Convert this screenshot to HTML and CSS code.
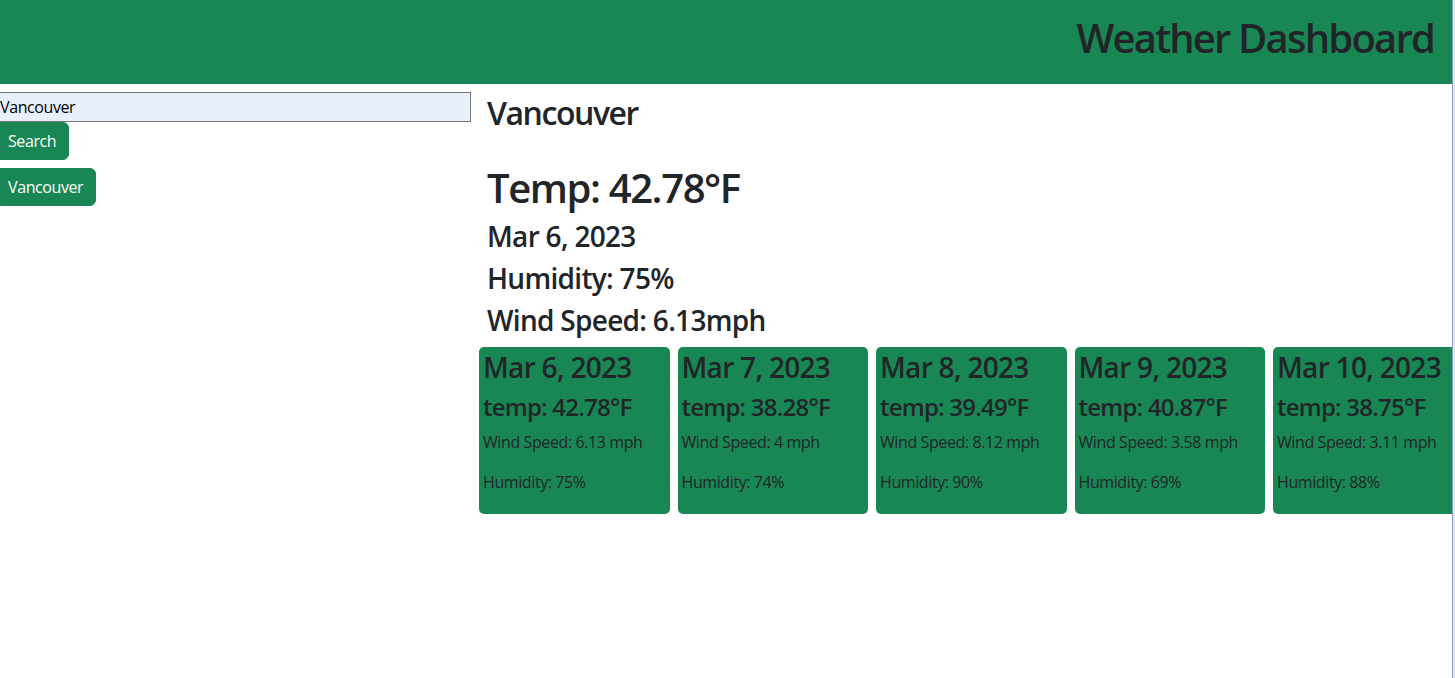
FILE: index.html
```html
<!DOCTYPE html>
<html lang="en">
<head>
<meta charset="utf-8">
<title>Weather Dashboard</title>
<link rel="stylesheet" href="styles.css">
</head>
<body>
<header class="site-header">
  <h1 class="site-title">Weather Dashboard</h1>
</header>
<main class="layout">
  <aside class="sidebar">
    <input class="search-input" type="text" value="Vancouver">
    <button class="btn btn-search">Search</button>
    <div class="history">
      <button class="btn">Vancouver</button>
    </div>
  </aside>
  <section class="content">
    <div class="current">
      <h2 class="city">Vancouver</h2>
      <h1 class="temp">Temp: 42.78°F</h1>
      <h3 class="line">Mar 6, 2023</h3>
      <h3 class="line">Humidity: 75%</h3>
      <h3 class="line">Wind Speed: 6.13mph</h3>
    </div>
    <div class="forecast">
      <div class="card">
        <h3 class="card-date">Mar 6, 2023</h3>
        <h4 class="card-temp">temp: 42.78°F</h4>
        <p class="card-text">Wind Speed: 6.13 mph</p>
        <p class="card-text">Humidity: 75%</p>
      </div>
      <div class="card">
        <h3 class="card-date">Mar 7, 2023</h3>
        <h4 class="card-temp">temp: 38.28°F</h4>
        <p class="card-text">Wind Speed: 4 mph</p>
        <p class="card-text">Humidity: 74%</p>
      </div>
      <div class="card">
        <h3 class="card-date">Mar 8, 2023</h3>
        <h4 class="card-temp">temp: 39.49°F</h4>
        <p class="card-text">Wind Speed: 8.12 mph</p>
        <p class="card-text">Humidity: 90%</p>
      </div>
      <div class="card">
        <h3 class="card-date">Mar 9, 2023</h3>
        <h4 class="card-temp">temp: 40.87°F</h4>
        <p class="card-text">Wind Speed: 3.58 mph</p>
        <p class="card-text">Humidity: 69%</p>
      </div>
      <div class="card">
        <h3 class="card-date">Mar 10, 2023</h3>
        <h4 class="card-temp">temp: 38.75°F</h4>
        <p class="card-text">Wind Speed: 3.11 mph</p>
        <p class="card-text">Humidity: 88%</p>
      </div>
    </div>
  </section>
</main>
<div class="window-edge"></div>
</body>
</html>
```

FILE: styles.css
```css
* { box-sizing: border-box; }

html, body {
  margin: 0;
  padding: 0;
  overflow: hidden;
  height: 100%;
}

body {
  font-family: "Open Sans", "Noto Sans", sans-serif;
  font-size: 16px;
  line-height: 1.5;
  letter-spacing: -0.025em;
  color: #212529;
  background: #fff;
}

h1, h2, h3, h4, p {
  margin: 0;
  font-weight: 600;
  line-height: 1.2;
}

.site-header {
  background: #198754;
  height: 84px;
  padding: 14px 18px 0 0;
  display: flex;
  justify-content: flex-end;
  width: 1452px;
}

.site-title {
  font-size: 40px;
  letter-spacing: -0.045em;
  color: #212529;
}

.layout {
  display: flex;
  gap: 8px;
  margin-left: -5px;
  padding-top: 8px;
  width: 1480px;
}

.sidebar {
  width: 476px;
  flex: 0 0 476px;
  display: flex;
  flex-direction: column;
  align-items: flex-start;
}

.search-input {
  width: 474px;
  margin-left: 2px;
  height: 30px;
  font: inherit;
  font-size: 16px;
  line-height: 24px;
  letter-spacing: -0.025em;
  padding: 1px 2px;
  border: 1px solid #767676;
  background: #e8f0fe;
  color: #000;
  border-radius: 0;
}

.btn {
  font: inherit;
  font-size: 16px;
  line-height: 24px;
  letter-spacing: -0.025em;
  padding: 6px 12px;
  border: 1px solid #198754;
  background: #198754;
  color: #fff;
  border-radius: 6px;
}

.history {
  margin-top: 8px;
}

.content {
  flex: 1;
  display: flex;
  flex-direction: column;
}

.current {
  padding: 2px 0 0 8px;
}

.city {
  font-size: 32px;
  letter-spacing: -0.045em;
  margin-bottom: 32px;
}

.temp {
  font-size: 40px;
  letter-spacing: -0.035em;
  margin-bottom: 8px;
}

.line {
  font-size: 28px;
  letter-spacing: -0.025em;
  margin-bottom: 8px;
}

.forecast {
  display: flex;
  gap: 8px;
  margin-top: 2px;
}

.card {
  flex: 0 0 190.5px;
  background: #198754;
  border-radius: 5px;
  padding: 4px;
}

.card-date {
  font-size: 28px;
  letter-spacing: -0.025em;
  margin-bottom: 8px;
  white-space: nowrap;
}

.card-temp {
  font-size: 24px;
  letter-spacing: -0.032em;
  margin-bottom: 8px;
  white-space: nowrap;
}

.card-text {
  font-size: 16px;
  line-height: 1.5;
  font-weight: 400;
  letter-spacing: -0.025em;
  margin-bottom: 16px;
  white-space: nowrap;
}

.window-edge {
  position: fixed;
  top: 0;
  right: 0;
  width: 3px;
  height: 100%;
  background: #dfe6f1;
  border-left: 1px solid #8aa2c8;
}
```
